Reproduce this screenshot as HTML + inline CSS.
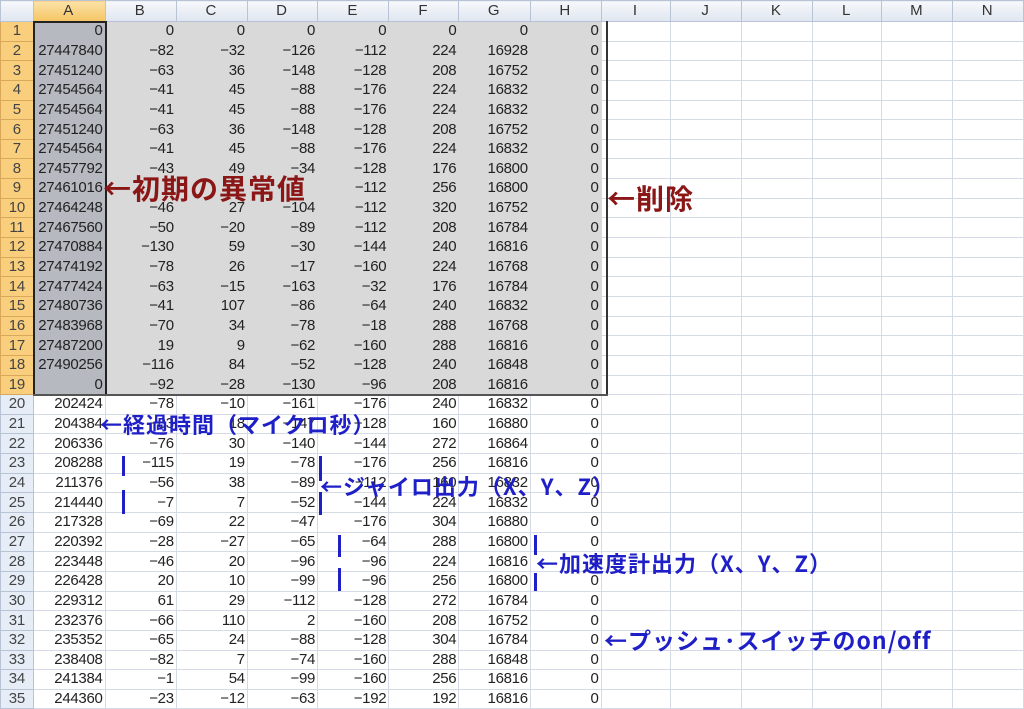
<!DOCTYPE html>
<html><head><meta charset="utf-8"><style>
body{margin:0;width:1024px;height:706px;overflow:hidden;background:#fff;font-family:"Liberation Sans",sans-serif;position:relative}
table{border-collapse:collapse;table-layout:fixed;position:absolute;left:0;top:0}
td{height:18.65px;border:1px solid #d4dbe6;padding:0 2px 0 0;text-align:right;font-size:15px;color:#222;white-space:nowrap;overflow:hidden;line-height:18px;letter-spacing:-0.3px}
tr.h td{height:20px;background:linear-gradient(#f6f8fb,#dfe6f0);text-align:center;color:#333;font-size:15px;border-color:#b8c4d6}
td.r{text-align:center;background:#e6edf7;color:#444;border-color:#b8c4d6;padding:0}
td.ro{text-align:center;background:#f9cf7e;color:#444;border-color:#d9a85a;padding:0}
tr.h td.ao{background:linear-gradient(#fbe2a8,#f5c563)}
td.s{background:#d9d9d9;border-color:#d9d9d9}
td.a{background:#b6b9c0;border-color:#b6b9c0}
.lab{position:absolute;font-weight:bold;font-family:"Noto Sans CJK JP",sans-serif;white-space:nowrap;line-height:1}
.red{color:#8a1616;font-size:28px;letter-spacing:1px}
.blue{color:#1f1fc8;font-size:22px;letter-spacing:1px}
.bar{position:absolute;width:3px;background:#1f1fc8}
</style></head><body>
<table>
<colgroup><col style="width:33px"><col style="width:72px"><col style="width:72px"><col style="width:72px"><col style="width:71px"><col style="width:72px"><col style="width:71px"><col style="width:72px"><col style="width:72px"><col style="width:71px"><col style="width:72px"><col style="width:72px"><col style="width:71px"><col style="width:72px"><col style="width:72px"></colgroup>
<tr class="h"><td></td><td class="ao">A</td><td>B</td><td>C</td><td>D</td><td>E</td><td>F</td><td>G</td><td>H</td><td>I</td><td>J</td><td>K</td><td>L</td><td>M</td><td>N</td></tr>
<tr><td class="ro">1</td><td class="a">0</td><td class="s">0</td><td class="s">0</td><td class="s">0</td><td class="s">0</td><td class="s">0</td><td class="s">0</td><td class="s">0</td><td></td><td></td><td></td><td></td><td></td><td></td></tr>
<tr><td class="ro">2</td><td class="a">27447840</td><td class="s">−82</td><td class="s">−32</td><td class="s">−126</td><td class="s">−112</td><td class="s">224</td><td class="s">16928</td><td class="s">0</td><td></td><td></td><td></td><td></td><td></td><td></td></tr>
<tr><td class="ro">3</td><td class="a">27451240</td><td class="s">−63</td><td class="s">36</td><td class="s">−148</td><td class="s">−128</td><td class="s">208</td><td class="s">16752</td><td class="s">0</td><td></td><td></td><td></td><td></td><td></td><td></td></tr>
<tr><td class="ro">4</td><td class="a">27454564</td><td class="s">−41</td><td class="s">45</td><td class="s">−88</td><td class="s">−176</td><td class="s">224</td><td class="s">16832</td><td class="s">0</td><td></td><td></td><td></td><td></td><td></td><td></td></tr>
<tr><td class="ro">5</td><td class="a">27454564</td><td class="s">−41</td><td class="s">45</td><td class="s">−88</td><td class="s">−176</td><td class="s">224</td><td class="s">16832</td><td class="s">0</td><td></td><td></td><td></td><td></td><td></td><td></td></tr>
<tr><td class="ro">6</td><td class="a">27451240</td><td class="s">−63</td><td class="s">36</td><td class="s">−148</td><td class="s">−128</td><td class="s">208</td><td class="s">16752</td><td class="s">0</td><td></td><td></td><td></td><td></td><td></td><td></td></tr>
<tr><td class="ro">7</td><td class="a">27454564</td><td class="s">−41</td><td class="s">45</td><td class="s">−88</td><td class="s">−176</td><td class="s">224</td><td class="s">16832</td><td class="s">0</td><td></td><td></td><td></td><td></td><td></td><td></td></tr>
<tr><td class="ro">8</td><td class="a">27457792</td><td class="s">−43</td><td class="s">49</td><td class="s">−34</td><td class="s">−128</td><td class="s">176</td><td class="s">16800</td><td class="s">0</td><td></td><td></td><td></td><td></td><td></td><td></td></tr>
<tr><td class="ro">9</td><td class="a">27461016</td><td class="s"></td><td class="s"></td><td class="s"></td><td class="s">−112</td><td class="s">256</td><td class="s">16800</td><td class="s">0</td><td></td><td></td><td></td><td></td><td></td><td></td></tr>
<tr><td class="ro">10</td><td class="a">27464248</td><td class="s">−46</td><td class="s">27</td><td class="s">−104</td><td class="s">−112</td><td class="s">320</td><td class="s">16752</td><td class="s">0</td><td></td><td></td><td></td><td></td><td></td><td></td></tr>
<tr><td class="ro">11</td><td class="a">27467560</td><td class="s">−50</td><td class="s">−20</td><td class="s">−89</td><td class="s">−112</td><td class="s">208</td><td class="s">16784</td><td class="s">0</td><td></td><td></td><td></td><td></td><td></td><td></td></tr>
<tr><td class="ro">12</td><td class="a">27470884</td><td class="s">−130</td><td class="s">59</td><td class="s">−30</td><td class="s">−144</td><td class="s">240</td><td class="s">16816</td><td class="s">0</td><td></td><td></td><td></td><td></td><td></td><td></td></tr>
<tr><td class="ro">13</td><td class="a">27474192</td><td class="s">−78</td><td class="s">26</td><td class="s">−17</td><td class="s">−160</td><td class="s">224</td><td class="s">16768</td><td class="s">0</td><td></td><td></td><td></td><td></td><td></td><td></td></tr>
<tr><td class="ro">14</td><td class="a">27477424</td><td class="s">−63</td><td class="s">−15</td><td class="s">−163</td><td class="s">−32</td><td class="s">176</td><td class="s">16784</td><td class="s">0</td><td></td><td></td><td></td><td></td><td></td><td></td></tr>
<tr><td class="ro">15</td><td class="a">27480736</td><td class="s">−41</td><td class="s">107</td><td class="s">−86</td><td class="s">−64</td><td class="s">240</td><td class="s">16832</td><td class="s">0</td><td></td><td></td><td></td><td></td><td></td><td></td></tr>
<tr><td class="ro">16</td><td class="a">27483968</td><td class="s">−70</td><td class="s">34</td><td class="s">−78</td><td class="s">−18</td><td class="s">288</td><td class="s">16768</td><td class="s">0</td><td></td><td></td><td></td><td></td><td></td><td></td></tr>
<tr><td class="ro">17</td><td class="a">27487200</td><td class="s">19</td><td class="s">9</td><td class="s">−62</td><td class="s">−160</td><td class="s">288</td><td class="s">16816</td><td class="s">0</td><td></td><td></td><td></td><td></td><td></td><td></td></tr>
<tr><td class="ro">18</td><td class="a">27490256</td><td class="s">−116</td><td class="s">84</td><td class="s">−52</td><td class="s">−128</td><td class="s">240</td><td class="s">16848</td><td class="s">0</td><td></td><td></td><td></td><td></td><td></td><td></td></tr>
<tr><td class="ro">19</td><td class="a">0</td><td class="s">−92</td><td class="s">−28</td><td class="s">−130</td><td class="s">−96</td><td class="s">208</td><td class="s">16816</td><td class="s">0</td><td></td><td></td><td></td><td></td><td></td><td></td></tr>
<tr><td class="r">20</td><td>202424</td><td>−78</td><td>−10</td><td>−161</td><td>−176</td><td>240</td><td>16832</td><td>0</td><td></td><td></td><td></td><td></td><td></td><td></td></tr>
<tr><td class="r">21</td><td>204384</td><td>−83</td><td>18</td><td>−147</td><td>−128</td><td>160</td><td>16880</td><td>0</td><td></td><td></td><td></td><td></td><td></td><td></td></tr>
<tr><td class="r">22</td><td>206336</td><td>−76</td><td>30</td><td>−140</td><td>−144</td><td>272</td><td>16864</td><td>0</td><td></td><td></td><td></td><td></td><td></td><td></td></tr>
<tr><td class="r">23</td><td>208288</td><td>−115</td><td>19</td><td>−78</td><td>−176</td><td>256</td><td>16816</td><td>0</td><td></td><td></td><td></td><td></td><td></td><td></td></tr>
<tr><td class="r">24</td><td>211376</td><td>−56</td><td>38</td><td>−89</td><td>−112</td><td>160</td><td>16832</td><td>0</td><td></td><td></td><td></td><td></td><td></td><td></td></tr>
<tr><td class="r">25</td><td>214440</td><td>−7</td><td>7</td><td>−52</td><td>−144</td><td>224</td><td>16832</td><td>0</td><td></td><td></td><td></td><td></td><td></td><td></td></tr>
<tr><td class="r">26</td><td>217328</td><td>−69</td><td>22</td><td>−47</td><td>−176</td><td>304</td><td>16880</td><td>0</td><td></td><td></td><td></td><td></td><td></td><td></td></tr>
<tr><td class="r">27</td><td>220392</td><td>−28</td><td>−27</td><td>−65</td><td>−64</td><td>288</td><td>16800</td><td>0</td><td></td><td></td><td></td><td></td><td></td><td></td></tr>
<tr><td class="r">28</td><td>223448</td><td>−46</td><td>20</td><td>−96</td><td>−96</td><td>224</td><td>16816</td><td>0</td><td></td><td></td><td></td><td></td><td></td><td></td></tr>
<tr><td class="r">29</td><td>226428</td><td>20</td><td>10</td><td>−99</td><td>−96</td><td>256</td><td>16800</td><td>0</td><td></td><td></td><td></td><td></td><td></td><td></td></tr>
<tr><td class="r">30</td><td>229312</td><td>61</td><td>29</td><td>−112</td><td>−128</td><td>272</td><td>16784</td><td>0</td><td></td><td></td><td></td><td></td><td></td><td></td></tr>
<tr><td class="r">31</td><td>232376</td><td>−66</td><td>110</td><td>2</td><td>−160</td><td>208</td><td>16752</td><td>0</td><td></td><td></td><td></td><td></td><td></td><td></td></tr>
<tr><td class="r">32</td><td>235352</td><td>−65</td><td>24</td><td>−88</td><td>−128</td><td>304</td><td>16784</td><td>0</td><td></td><td></td><td></td><td></td><td></td><td></td></tr>
<tr><td class="r">33</td><td>238408</td><td>−82</td><td>7</td><td>−74</td><td>−160</td><td>288</td><td>16848</td><td>0</td><td></td><td></td><td></td><td></td><td></td><td></td></tr>
<tr><td class="r">34</td><td>241384</td><td>−1</td><td>54</td><td>−99</td><td>−160</td><td>256</td><td>16816</td><td>0</td><td></td><td></td><td></td><td></td><td></td><td></td></tr>
<tr><td class="r">35</td><td>244360</td><td>−23</td><td>−12</td><td>−63</td><td>−192</td><td>192</td><td>16816</td><td>0</td><td></td><td></td><td></td><td></td><td></td><td></td></tr>
</table>
<div style="position:absolute;left:33px;top:21px;width:70px;height:371px;border:2px solid #222"></div>
<div style="position:absolute;left:606px;top:21px;width:2px;height:375px;background:#333"></div>
<div style="position:absolute;left:33px;top:394px;width:575px;height:2px;background:#555"></div>
<div class="lab red" style="left:103px;top:174px">←初期の異常値</div>
<div class="lab red" style="left:607px;top:184px">←削除</div>
<div class="lab blue" style="left:100px;top:413px">←経過時間（マイクロ秒）</div>
<div class="lab blue" style="left:320px;top:475px">←ジャイロ出力（X、Y、Z）</div>
<div class="lab blue" style="left:536px;top:552px">←加速度計出力（X、Y、Z）</div>
<div class="lab blue" style="left:604px;top:628px;font-size:23px">←プッシュ･スイッチのon/off</div>
<div class="bar" style="left:122px;top:456px;height:20px"></div>
<div class="bar" style="left:122px;top:490px;height:24px"></div>
<div class="bar" style="left:319px;top:456px;height:25px"></div>
<div class="bar" style="left:319px;top:492px;height:23px"></div>
<div class="bar" style="left:338px;top:535px;height:22px"></div>
<div class="bar" style="left:338px;top:568px;height:23px"></div>
<div class="bar" style="left:534px;top:535px;height:20px"></div>
<div class="bar" style="left:534px;top:573px;height:18px"></div>
</body></html>
